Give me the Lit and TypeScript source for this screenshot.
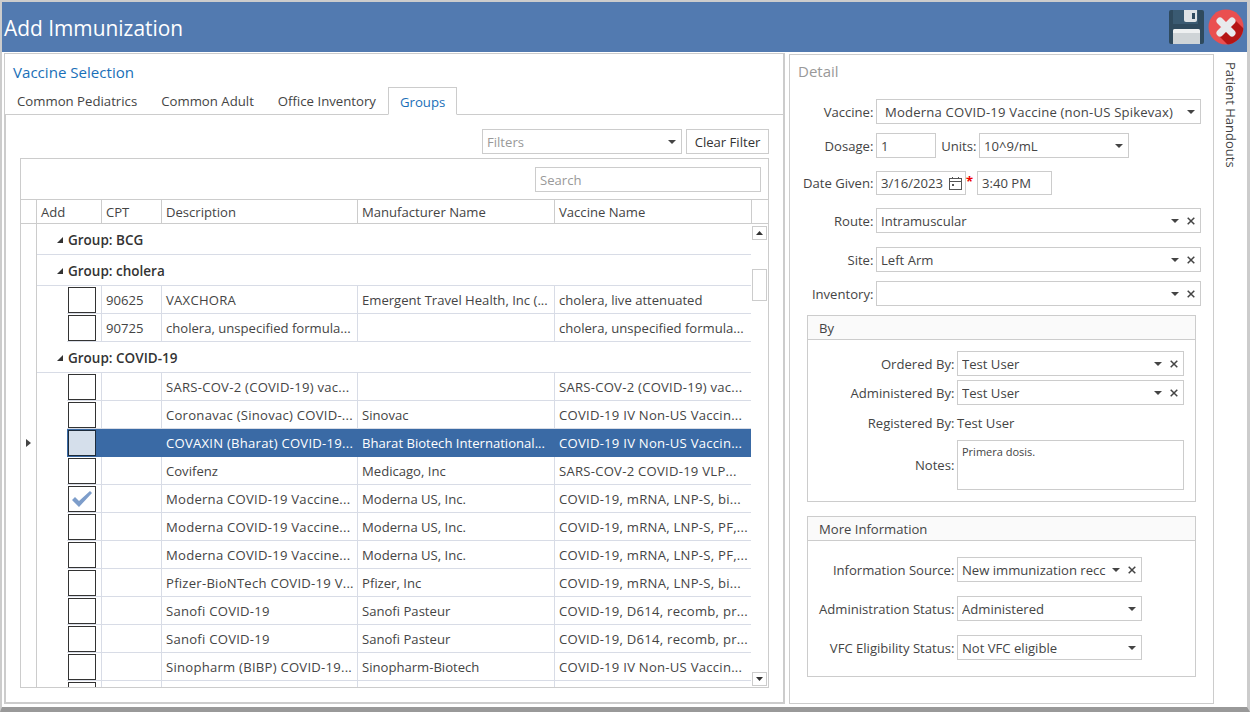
import { LitElement, html, css } from "lit";
import { customElement } from "lit/decorators.js";

const rows: any[] = [
  { g: "BCG" },
  { g: "cholera" },
  { cpt: "90625", d: "VAXCHORA", m: "Emergent Travel Health, Inc (...", v: "cholera, live attenuated" },
  { cpt: "90725", d: "cholera, unspecified formula...", m: "", v: "cholera, unspecified formula..." },
  { g: "COVID-19" },
  { d: "SARS-COV-2 (COVID-19) vac...", m: "", v: "SARS-COV-2 (COVID-19) vac..." },
  { d: "Coronavac (Sinovac) COVID-...", m: "Sinovac", v: "COVID-19 IV Non-US Vaccin..." },
  { d: "COVAXIN (Bharat) COVID-19...", m: "Bharat Biotech International...", v: "COVID-19 IV Non-US Vaccin...", sel: true },
  { d: "Covifenz", m: "Medicago, Inc", v: "SARS-COV-2 COVID-19 VLP..." },
  { d: "Moderna COVID-19 Vaccine...", m: "Moderna US, Inc.", v: "COVID-19, mRNA, LNP-S, bi...", chk: true },
  { d: "Moderna COVID-19 Vaccine...", m: "Moderna US, Inc.", v: "COVID-19, mRNA, LNP-S, PF,..." },
  { d: "Moderna COVID-19 Vaccine...", m: "Moderna US, Inc.", v: "COVID-19, mRNA, LNP-S, PF,..." },
  { d: "Pfizer-BioNTech COVID-19 V...", m: "Pfizer, Inc", v: "COVID-19, mRNA, LNP-S, bi..." },
  { d: "Sanofi COVID-19", m: "Sanofi Pasteur", v: "COVID-19, D614, recomb, pr..." },
  { d: "Sanofi COVID-19", m: "Sanofi Pasteur", v: "COVID-19, D614, recomb, pr..." },
  { d: "Sinopharm (BIBP) COVID-19...", m: "Sinopharm-Biotech", v: "COVID-19 IV Non-US Vaccin..." },
  { d: "", m: "", v: "" },
];

const caps = (t: string) => (/[A-Z]{3}/.test(t) ? "caps" : "");

const caret = html`<svg class="caret" width="8" height="4" viewBox="0 0 8 4"><path d="M0 0H8L4 4Z" fill="#444"/></svg>`;
const xIcon = html`<svg class="x" width="8" height="8" viewBox="0 0 8 8"><path d="M.7 .7L7.3 7.3M7.3 .7L.7 7.3" stroke="#444" stroke-width="1.5" fill="none"/></svg>`;

@customElement("app-root")
export class AppRoot extends LitElement {
  static styles = css`
    :host { display: block; width: 1250px; height: 712px; overflow: hidden; background: #fff; font-family: "Open Sans", "Noto Sans", sans-serif; font-size: 13.1px; color: #444; }
    * { box-sizing: border-box; }
    .win { width: 1250px; height: 712px; display: flex; flex-direction: column; border-top: 2px solid #ccc; border-left: 2px solid #ccc; border-right: 3px solid #ccc; border-bottom: 5px solid #999; background: #fff; }
    .title { flex: 0 0 50px; background: #527ab0; display: flex; align-items: center; justify-content: space-between; color: #fff; padding: 0 2px; }
    .title h1 { margin: 2px 0 0; font-size: 20.9px; font-weight: 400; }
    .actions { display: flex; align-items: center; gap: 4px; margin-right: 1px; }
    .body { flex: 1; display: flex; min-height: 0; background: #fff; padding: 1px 0 3px 2px; }
    .left { width: 781px; border: 1px solid #ccc; border-bottom-width: 2px; border-right-width: 2px; display: flex; flex-direction: column; }
    .sec { color: #1a6fb8; font-size: 15.1px; padding: 8px 0 0 8px; height: 33px; }
    .tabs { display: flex; height: 28px; border-bottom: 1px solid #ccc; flex: none; font-size: 13.2px; }
    .tab { padding: 0 12px; line-height: 29px; }
    .tab.on { color: #1a6fb8; border: 1px solid #ccc; border-bottom: 1px solid #fff; padding: 0 11px; height: 28px; line-height: 28px; background: #fff; }
    .tabbody { flex: 1; min-height: 0; padding: 14px; display: flex; flex-direction: column; border-left: 1px solid #ccc; }
    .filterbar { display: flex; justify-content: flex-end; gap: 4px; height: 25px; margin-bottom: 4px; flex: none; }
    .filters { width: 200px; }
    .btn { border: 1px solid #ccc; width: 83px; display: flex; align-items: center; justify-content: center; color: #333; }
    .field { border: 1px solid #ccc; height: 25px; display: flex; align-items: center; padding: 0 5px 0 4px; background: #fff; color: #444; min-width: 0; }
    .field .val { flex: 1; white-space: nowrap; overflow: hidden; }
    .field .val.inset { padding-left: 4px; letter-spacing: .19px; }
    .field .caret { flex: none; }
    .field .x { flex: none; margin-left: 8px; }
    .cal { flex: none; margin-right: -2px; }
    .ph { color: #999; }
    .grid { flex: 1; position: relative; border: 1px solid #ccc; min-height: 0; display: flex; flex-direction: column; overflow: hidden; }
    .gridtop { height: 41px; display: flex; justify-content: flex-end; align-items: flex-start; padding: 8px 7px 0 0; border-bottom: 1px solid #ccc; flex: none; }
    .search { width: 226px; }
    .hdr { display: grid; height: 24px; flex: none; border-bottom: 1px solid #ccc; grid-template-columns: 16px 65px 60px 196px 197px 197px 16px; }
    .hdr > div { border-right: 1px solid #ccc; padding: 1px 0 0 4px; line-height: 23px; }
    .hdr > div:last-child { border-right: 0; }
    .rows { flex: 1; min-height: 0; overflow: hidden; position: relative; }
    .row { display: grid; height: 28px; width: 731px; grid-template-columns: 16px 30px 35px 60px 196px 197px 197px; }
    .row > div { border-right: 1px solid #d8dce6; border-bottom: 1px solid #d8dce6; padding: 1px 0 0 4px; line-height: 27px; white-space: nowrap; overflow: hidden; }
    .row > div.ind { border-right: 1px solid #ccc; border-bottom: 0; padding: 0; display: flex; align-items: center; justify-content: center; }
    .row > div.gap { border: 0; padding: 0; }
    .row > div.last { border-right: 0; }
    .row > div.add { padding: 1px 0 0 1px; }
    .row > div.caps { letter-spacing: .25px; }
    .row.sel > div:not(.ind):not(.gap) { background: #3a6aa5; color: #fff; border-color: #3a6aa5; }
    .cb { width: 28px; height: 26px; border: 1px solid #333; background: #fff; display: flex; align-items: center; justify-content: center; }
    .row.sel .cb { background: #d5dfeb; border-color: #1d2b3a; }
    .grp { display: grid; grid-template-columns: 16px 1fr; height: 31px; width: 731px; }
    .grp .ind { border-right: 1px solid #ccc; }
    .grp .lbl { border-bottom: 1px solid #d8dce6; font-weight: 600; font-size: 13.5px; color: #333; display: flex; align-items: center; gap: 5px; padding: 2px 0 0 20px; }
    .scroll { position: absolute; right: 0; top: 0; bottom: 0; width: 17px; background: #fff; }
    .sbtn { position: absolute; left: 1px; width: 15px; height: 14px; border: 1px solid #ccc; display: flex; align-items: center; justify-content: center; background: #fff; }
    .sbtn.up { top: 2px; }
    .sbtn.down { bottom: 1px; }
    .thumb { position: absolute; left: 1px; top: 45px; width: 15px; height: 32px; border: 1px solid #ccc; background: #fff; }
    .right { width: 425px; margin: 1px 0 0 4px; border: 1px solid #ccc; display: flex; flex-direction: column; }
    .dt { color: #999; font-size: 15px; padding: 6px 0 0 8px; height: 37px; flex: none; }
    .frow { display: flex; align-items: center; flex: none; }
    .lab { text-align: right; flex: none; padding-right: 2.6px; white-space: nowrap; }
    .fx { flex: none; }
    .box { margin: 0 0 0 17px; width: 389px; border: 1px solid #ccc; flex: none; }
    .box h3 { margin: 0; font-weight: 400; font-size: 13.1px; height: 24px; line-height: 25px; padding-left: 11px; background: #fafafa; border-bottom: 1px solid #ccc; }
    .ta { height: 50px; padding-top: 3px; font-size: 11px; display: block; }
    .req { color: #e00; font-weight: 700; width: 11px; font-size: 13px; line-height: 13px; margin-top: -4px; }
    .side { width: 33px; display: flex; justify-content: center; padding-top: 9px; }
    .side span { writing-mode: vertical-rl; white-space: nowrap; font-size: 13px; margin-left: 1px; }
  `;

  fld(val: string, w: number, clear = false, inset = false) {
    return html`<div class="field fx" style="width:${w}px"><span class="val ${inset ? "inset" : ""}">${val}</span>${caret}${clear ? xIcon : ""}</div>`;
  }

  row(l: string, lw: number, val: string, w: number, clear: boolean, mt: number, inset = false) {
    return html`<div class="frow" style="margin-top:${mt}px"><div class="lab" style="width:${lw}px">${l}</div>${this.fld(val, w, clear, inset)}</div>`;
  }

  renderRow(r: any) {
    if (r.g) {
      return html`<div class="grp"><div class="ind"></div><div class="lbl"><svg width="6" height="6" viewBox="0 0 6 6"><path d="M6 0V6H0Z" fill="#333"/></svg>Group: ${r.g}</div></div>`;
    }
    return html`<div class="row ${r.sel ? "sel" : ""}">
      <div class="ind">${r.sel ? html`<svg width="5" height="8" viewBox="0 0 5 8"><path d="M0 0L5 4L0 8Z" fill="#444"/></svg>` : ""}</div>
      <div class="gap"></div>
      <div class="add"><div class="cb">${r.chk ? html`<svg width="22" height="18" viewBox="0 0 22 18"><path d="M1 10L4 7L8 11L19 1L21 3L8 17Z" fill="#7d9dca"/></svg>` : ""}</div></div>
      <div>${r.cpt ?? ""}</div><div class=${caps(r.d)}>${r.d}</div><div>${r.m}</div><div class="last ${caps(r.v)}">${r.v}</div>
    </div>`;
  }

  render() {
    return html`<div class="win">
      <div class="title">
        <h1>Add Immunization</h1>
        <div class="actions">
          <svg width="35" height="34" viewBox="0 0 35 34">
            <rect width="35" height="34" rx="2" fill="#2f4a5e"/>
            <rect x="4" y="0" width="25" height="14" fill="#3a5a72"/>
            <path d="M15 0H28V10a2 2 0 0 1-2 2H17a2 2 0 0 1-2-2Z" fill="#dfe3e6"/>
            <rect x="23" y="3" width="3" height="6" fill="#2f4a5e"/>
            <path d="M6 19H29a2 2 0 0 1 2 2V34H4V21a2 2 0 0 1 2-2Z" fill="#cfd4d7"/>
            <path d="M4 23V21a2 2 0 0 1 2-2H29a2 2 0 0 1 2 2V23Z" fill="#eef0f1"/>
          </svg>
          <svg width="36" height="36" viewBox="0 0 36 36">
            <defs><clipPath id="cc"><circle cx="18" cy="18" r="17.5"/></clipPath></defs>
            <circle cx="18" cy="18" r="17.5" fill="#ea4f50"/>
            <path d="M26 10L44 28V44H28L10 26Z" fill="#b51515" clip-path="url(#cc)"/>
            <path d="M12 12L24 24M24 12L12 24" stroke="#e8eaed" stroke-width="7" stroke-linecap="round"/>
          </svg>
        </div>
      </div>
      <div class="body">
        <div class="left">
          <div class="sec">Vaccine Selection</div>
          <div class="tabs">
            <div class="tab">Common Pediatrics</div><div class="tab">Common Adult</div><div class="tab">Office Inventory</div><div class="tab on">Groups</div>
          </div>
          <div class="tabbody">
            <div class="filterbar">
              <div class="field filters"><span class="val ph">Filters</span>${caret}</div>
              <div class="btn">Clear Filter</div>
            </div>
            <div class="grid">
              <div class="gridtop"><div class="field search"><span class="val ph">Search</span></div></div>
              <div class="hdr"><div></div><div>Add</div><div>CPT</div><div>Description</div><div>Manufacturer Name</div><div>Vaccine Name</div><div></div></div>
              <div class="rows">
                ${rows.map((r) => this.renderRow(r))}
                <div class="scroll">
                  <div class="sbtn up"><svg width="7" height="4" viewBox="0 0 7 4"><path d="M0 4H7L3.5 0Z" fill="#333"/></svg></div>
                  <div class="thumb"></div>
                  <div class="sbtn down"><svg width="7" height="4" viewBox="0 0 7 4"><path d="M0 0H7L3.5 4Z" fill="#333"/></svg></div>
                </div>
              </div>
            </div>
          </div>
        </div>
        <div class="right">
          <div class="dt">Detail</div>
          ${this.row("Vaccine:", 86, "Moderna COVID-19 Vaccine (non-US Spikevax)", 325, false, 7, true)}
          <div class="frow" style="margin-top:9px">
            <div class="lab" style="width:86px">Dosage:</div>
            <div class="field fx" style="width:60px">1</div>
            <div class="lab" style="width:43px">Units:</div>
            ${this.fld("10^9/mL", 150)}
          </div>
          <div class="frow" style="margin-top:13px">
            <div class="lab" style="width:86px">Date Given:</div>
            <div class="field fx" style="width:90px;height:24px"><span class="val">3/16/2023</span>
              <svg class="cal" width="13" height="13" viewBox="0 0 13 13" fill="none" stroke="#555"><rect x=".5" y="1.5" width="12" height="11"/><path d="M.5 4.5H12.5M3.5 0V2M9.5 0V2"/><rect x="3" y="7" width="2" height="2" fill="#555" stroke="none"/></svg>
            </div>
            <div class="req">*</div>
            <div class="field fx" style="width:75px;height:24px">3:40 PM</div>
          </div>
          ${this.row("Route:", 86, "Intramuscular", 325, true, 13)}
          ${this.row("Site:", 86, "Left Arm", 325, true, 14)}
          ${this.row("Inventory:", 86, "", 325, true, 9)}
          <div class="box" style="margin-top:9px">
            <h3>By</h3>
            <div style="padding:11px 0">
              ${this.row("Ordered By:", 149, "Test User", 227, true, 0)}
              ${this.row("Administered By:", 149, "Test User", 227, true, 4)}
              <div class="frow" style="margin-top:6px;height:24px"><div class="lab" style="width:149px">Registered By:</div><span>Test User</span></div>
              <div class="frow" style="margin-top:5px"><div class="lab" style="width:149px">Notes:</div><div class="field fx ta" style="width:227px">Primera dosis.</div></div>
            </div>
          </div>
          <div class="box" style="margin-top:14px">
            <h3>More Information</h3>
            <div style="padding:16px 0">
              ${this.row("Information Source:", 149, "New immunization recc", 185, true, 0)}
              ${this.row("Administration Status:", 149, "Administered", 185, false, 14)}
              ${this.row("VFC Eligibility Status:", 149, "Not VFC eligible", 185, false, 14)}
            </div>
          </div>
        </div>
        <div class="side"><span>Patient Handouts</span></div>
      </div>
    </div>`;
  }
}
